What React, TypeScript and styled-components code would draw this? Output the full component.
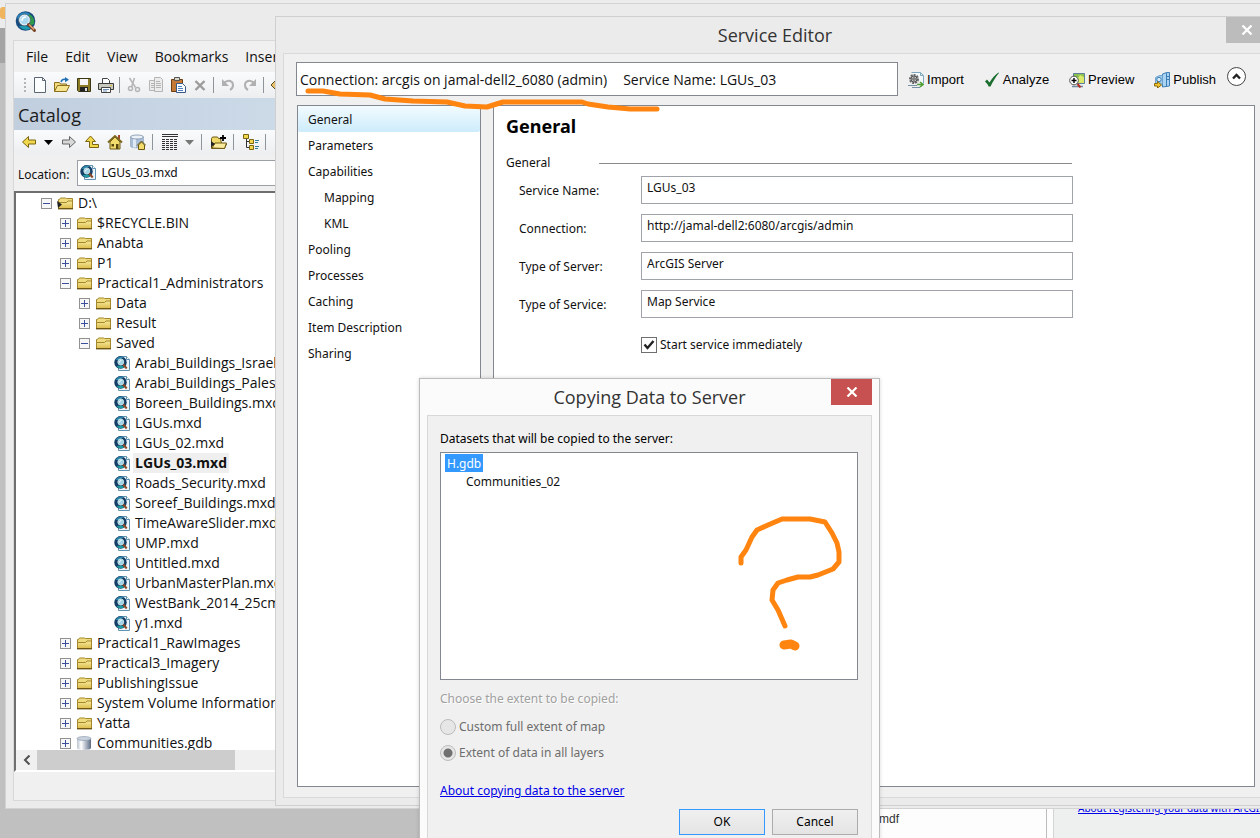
import React from "react";
import styled, { createGlobalStyle, css } from "styled-components";

const UI = `"Open Sans", "Noto Sans", sans-serif`;
const TAHOMA = `"Noto Sans", "DejaVu Sans Condensed", sans-serif`;
const ARIAL = `"Liberation Sans", Arial, sans-serif`;

const GlobalStyle = createGlobalStyle`
  *, *::before, *::after { box-sizing: border-box; }
  body { margin: 0; background: #c0c0c0; font-family: ${UI}; color: #111; overflow: hidden; }
  ul { list-style: none; margin: 0; padding: 0; }
  h1, h2, h3, p { margin: 0; font-weight: 400; }
  button { border: 0; padding: 0; background: none; font: inherit; color: inherit; }
  svg { display: block; flex: none; }
`;

const Desktop = styled.main`
  position: relative;
  height: 100vh;
  overflow: hidden;
  background: linear-gradient(#ececec 28px, #a4a4a4 28px, #a4a4a4 63px, #c0c0c0 63px);
`;

const DesktopBadge = styled.div`
  position: absolute;
  left: 0;
  top: 7px;
  width: 8px;
  height: 12px;
  border-radius: 3px;
  background: #f0b55c;
`;

/* Windows lying behind the ArcMap frame */
const BackWindow = styled.div`
  position: absolute;
  left: 600px;
  right: 0;
  bottom: 0;
  height: 60px;
  display: flex;
  background: #fdfdfd;
`;
const BackFiles = styled.div`
  flex: 0 0 447px;
  padding: 33px 0 0 279px;
  border-right: 1px solid #bdbdbd;
  font: 12px/16px ${ARIAL};
  color: #333;
`;
const BackHelp = styled.div`
  flex: 1;
  margin-left: 6px;
  padding: 22px 0 0 24px;
  border-left: 1px solid #d4d4d4;
  background: #eeefef;
  white-space: nowrap;
  overflow: hidden;
  font: 10px/16px ${TAHOMA};
`;
const Link = styled.a`
  color: #0000e6;
  text-decoration: underline;
`;

const MainWindow = styled.section`
  position: absolute;
  left: 5px;
  right: -30px;
  top: 3px;
  bottom: 29px;
  display: flex;
  flex-direction: column;
  padding: 0 8px 7px 7px;
  background: #ebebeb;
  border: 1px solid #d2d2d2;
`;
const MainTitle = styled.header`
  flex: 0 0 36px;
  padding: 7px 0 0 2px;
`;
const MainBody = styled.div`
  flex: 1;
  min-height: 0;
  display: flex;
  flex-direction: column;
  background: #f0f0f0;
  border: 1px solid #d8d8d8;
`;
const MenuBar = styled.nav`
  display: flex;
  align-items: center;
  gap: 17px;
  flex: 0 0 31px;
  padding-left: 12px;
  font-size: 14px;
`;
const ToolBar = styled.div<{ $gap: number; $indent: number; $height: number }>`
  display: flex;
  align-items: center;
  gap: ${(p) => p.$gap}px;
  padding-left: ${(p) => p.$indent}px;
  flex: 0 0 ${(p) => p.$height}px;
  background: linear-gradient(#fafbfc, #eceef0);
`;
const ToolButton = styled.button`
  display: block;
  flex: none;
`;
const Sep = styled.i<{ $after?: number }>`
  width: 1px;
  height: 16px;
  margin-left: -1px;
  margin-right: ${(p) => p.$after ?? 0}px;
  background: #8f949a;
`;
const Grip = styled.i`
  width: 2px;
  height: 14px;
  background: repeating-linear-gradient(#b4b4b4 0 2px, transparent 2px 4px);
`;
const CatalogTitle = styled.h2`
  flex: 0 0 32px;
  padding: 2px 0 0 4px;
  font-size: 18px;
  line-height: 30px;
  color: #1c1c1c;
  background: linear-gradient(90deg, #c0cede, #ccdae8 260px);
`;
const LocationRow = styled.label`
  display: flex;
  align-items: center;
  gap: 8px;
  flex: 0 0 37px;
  padding-left: 4px;
  font: 12px/16px ${TAHOMA};
`;
const LocationName = styled.span`
  padding-top: 4px;
`;
const LocationBox = styled.div`
  flex: 1;
  display: flex;
  align-items: center;
  gap: 4px;
  height: 26px;
  padding-left: 2px;
  background: #fff;
  border: 1px solid #9aa0a6;
`;
const PlainInput = styled.input`
  flex: 1;
  border: 0;
  padding: 0;
  outline: 0;
  background: none;
  color: #111;
  font: 12px/16px ${TAHOMA};
`;
const TreeBox = styled.div`
  flex: 1;
  min-height: 0;
  display: flex;
  flex-direction: column;
  border: 2px solid #6e6e6e;
  border-right-color: #fff;
  border-bottom-color: #fff;
  background: #fff;
`;
const Tree = styled.ul`
  flex: 1;
  min-height: 0;
  overflow: hidden;
`;
const TreeRow = styled.li<{ $level: number }>`
  display: flex;
  align-items: center;
  height: 20px;
  padding-left: ${(p) => 25 + p.$level * 19}px;
  font-size: 14px;
  white-space: nowrap;
`;
const Expander = styled.button`
  flex: none;
  width: 11px;
  height: 11px;
  margin-right: 5px;
  border: 1px solid #919191;
  background: #f7f7f7;
`;
const ExpanderSpace = styled.span`
  flex: none;
  width: 16px;
`;
const TreeLabel = styled.span<{ $selected?: boolean }>`
  height: 20px;
  margin-left: 2px;
  padding: 0 2px;
  line-height: 20px;
  ${(p) => p.$selected && css`font-weight: 700; background: #efefef;`}
`;
const HScroll = styled.div`
  display: flex;
  flex: 0 0 20px;
  background: #f0f0f0;
`;
const ScrollArrow = styled.button`
  display: grid;
  place-items: center;
  width: 21px;
`;
const ScrollThumb = styled.div`
  width: 198px;
  background: #cdcdcd;
`;
const StatusBar = styled.div`
  flex: 0 0 28px;
`;

const EditorWindow = styled.section`
  position: absolute;
  left: 275px;
  right: -15px;
  top: 16px;
  bottom: 32px;
  display: flex;
  flex-direction: column;
  padding: 0 7px 7px;
  background: #ebebeb;
  border: 1px solid #cfcfcf;
`;
const WindowTitle = styled.header`
  position: relative;
  flex: 0 0 36px;
  margin-bottom: -1px;
  text-align: center;
  color: #333;
`;
const TitleText = styled.h1`
  font-size: 18px;
  line-height: 37px;
`;
const CloseButton = styled.button<{ $color: string }>`
  position: absolute;
  top: 0;
  right: 0;
  width: 41px;
  height: 26px;
  display: grid;
  place-items: center;
  background: ${(p) => p.$color};
`;
const EditorBody = styled.div`
  flex: 1;
  min-height: 0;
  display: flex;
  flex-direction: column;
  gap: 9px;
  padding: 8px 11px 10px 12px;
  background: #f0f0f0;
  border: 1px solid #d9d9d9;
`;
const EditorTop = styled.div`
  display: flex;
  height: 34px;
`;
const ConnectionBox = styled.div`
  flex: 1;
  display: flex;
  gap: 16px;
  padding-left: 3px;
  font-size: 14px;
  line-height: 33px;
  white-space: nowrap;
  overflow: hidden;
  background: #fff;
  border: 1px solid #828790;
`;
const Actions = styled.div`
  display: flex;
  align-items: center;
  gap: 20px;
  padding: 1px 9px 0 10px;
`;
const Action = styled.button`
  display: flex;
  align-items: center;
  gap: 3px;
  font: 13px/18px ${ARIAL};
  color: #000;
`;
const RoundButton = styled.button`
  display: grid;
  place-items: center;
  width: 19px;
  height: 19px;
  margin: 0 0 6px -9px;
  border: 1px solid #444;
  border-radius: 50%;
  background: #fff;
`;
const EditorPanes = styled.div`
  flex: 1;
  min-height: 0;
  display: flex;
  gap: 12px;
  padding-left: 1px;
`;
const SideList = styled.ul`
  flex: 0 0 184px;
  background: #fff;
  border: 1px solid #828790;
`;
const SideItem = styled.li<{ $nested?: boolean; $active?: boolean }>`
  height: 26px;
  padding-left: ${(p) => (p.$nested ? 26 : 10)}px;
  font: 12px/28px ${TAHOMA};
  border-radius: 2px;
  ${(p) => p.$active && css`background: linear-gradient(#f2fbff, #cdecfb);`}
`;
const FormPane = styled.div`
  flex: 1;
  padding: 8px 12px;
  background: #fff;
  border: 1px solid #828790;
  font: 12px/16px ${TAHOMA};
`;
const FormTitle = styled.h2`
  font: 700 18px/24px ${TAHOMA};
  color: #000;
`;
const GroupTitle = styled.div`
  display: flex;
  align-items: center;
  margin-top: 17px;
  width: 566px;
`;
const GroupName = styled.h3`
  font-size: 12px;
  width: 93px;
`;
const GroupRule = styled.hr`
  flex: 1;
  margin: 0;
  border: 0;
  border-top: 1px solid #8a8a8a;
`;
const FormFields = styled.div`
  display: grid;
  gap: 10px;
  margin-top: 5px;
  padding-left: 13px;
`;
const Field = styled.label`
  display: flex;
  align-items: center;
`;
const FieldName = styled.span`
  width: 122px;
  padding-top: 2px;
`;
const FieldInput = styled.input`
  width: 432px;
  height: 28px;
  padding: 0 5px 5px;
  border: 1px solid #a0a4aa;
  background: #fff;
  color: #111;
  outline: 0;
  font: 12px/16px ${TAHOMA};
`;
const CheckRow = styled.label`
  display: flex;
  align-items: center;
  gap: 3px;
  margin: 9px 0 0 122px;
`;
const CheckWrap = styled.span`
  position: relative;
  width: 16px;
  height: 16px;
  svg { position: absolute; left: 2px; top: 2px; pointer-events: none; }
`;
const CheckBox = styled.input`
  appearance: none;
  display: block;
  width: 16px;
  height: 16px;
  margin: 0;
  border: 1px solid #6f6f6f;
  background: #fff;
`;

const Dialog = styled.section`
  position: absolute;
  left: 419px;
  top: 378px;
  width: 461px;
  display: flex;
  flex-direction: column;
  padding: 0 7px 7px;
  background: #fbfbfb;
  border: 1px solid #bcbcbc;
  box-shadow: 0 0 4px rgba(0, 0, 0, 0.15);
`;
const DialogBody = styled.div`
  display: flex;
  flex-direction: column;
  padding: 15px 13px 12px 12px;
  background: #f0f0f0;
  border: 1px solid #d8d8d8;
  font: 12px/16px ${TAHOMA};
`;
const DialogLabel = styled.p<{ $disabled?: boolean }>`
  color: ${(p) => (p.$disabled ? "#a0a0a0" : "#000")};
  text-shadow: ${(p) => (p.$disabled ? "1px 1px 0 #fff" : "none")};
`;
const DataList = styled.ul`
  height: 228px;
  margin: 5px 0 11px;
  padding: 1px 4px;
  background: #fff;
  border: 1px solid #828790;
`;
const DataItem = styled.li<{ $nested?: boolean; $selected?: boolean }>`
  width: max-content;
  height: 18px;
  line-height: 19px;
  padding: 0 2px;
  margin-left: ${(p) => (p.$nested ? 19 : 0)}px;
  ${(p) => p.$selected && css`background: #3399ff; color: #fff;`}
`;
const RadioRow = styled.label`
  display: flex;
  align-items: center;
  gap: 3px;
  height: 26px;
  color: #6d6d6d;
`;
const Radio = styled.input`
  appearance: none;
  width: 16px;
  height: 16px;
  margin: 0;
  border: 1px solid #bcbcbc;
  border-radius: 50%;
  background: #e6e6e6;
  &:checked { background: radial-gradient(circle, #707070 0 4px, #e6e6e6 5px); }
`;
const RadioGroup = styled.div`
  margin: 7px 0 17px;
`;
const DialogButtons = styled.div`
  display: flex;
  justify-content: flex-end;
  gap: 7px;
  margin-top: 10px;
`;
const PushButton = styled.button<{ $primary?: boolean }>`
  width: 86px;
  height: 26px;
  color: #000;
  background: linear-gradient(#f0f0f0, #e4e4e4);
  border: 1px solid ${(p) => (p.$primary ? "#3399ff" : "#acacac")};
`;
const Ink = styled.svg`
  position: absolute;
  left: 0;
  top: 0;
  pointer-events: none;
`;

const Cross = () => (
  <svg width="12" height="10" viewBox="0 0 12 10">
    <path d="M1.500.5l9 9M10.500.5l-9 9" stroke="#fff" strokeWidth="2.200" />
  </svg>
);

const GlobeLens = ({ size }: { size: number }) => (
  <svg width={size} height={size} viewBox="0 0 22 22">
    <circle cx="10.500" cy="10" r="9.800" fill="#174a7e" />
    <path d="M2 6c3-5 9-6 13-3l-3 3-5 1-3 4z" fill="#2b86bd" />
    <path d="M14 3c4 2 6 6 5 10l-4 2-1-6z" fill="#2f9a4c" />
    <path d="M4 15c3 4 8 5 12 2l-5-2z" fill="#1a9db0" />
    <circle cx="9.500" cy="9" r="5" fill="#a9d9f0" stroke="#e4eef4" strokeWidth="1.400" />
    <circle cx="9.500" cy="9" r="5.900" fill="none" stroke="#4d6474" strokeWidth=".7" />
    <path d="M7 10c0-3 2-4 4-4" stroke="#fff" strokeWidth="1.500" fill="none" />
    <path d="M13.500 13.500l6 6" stroke="#7a4326" strokeWidth="3" strokeLinecap="round" />
    <path d="M14 13.500l5 5" stroke="#e8a878" strokeWidth="1.200" />
  </svg>
);

const MxdIcon = () => (
  <svg width="17" height="17" viewBox="0 0 17 17">
    <path d="M4.500 1.500h8l3 3v11h-11z" fill="#eef6fb" stroke="#5f92b3" />
    <path d="M12.500 1.500v3h3" fill="#fff" stroke="#5f92b3" />
    <circle cx="6.500" cy="7.500" r="6.200" fill="#153e66" />
    <path d="M1.500 5c2-3 5-4 8-2.500l-4 2.500z" fill="#2e86a8" />
    <path d="M2.500 11c2 2.500 5 3 8 1l-3-1.500z" fill="#1f9aa0" />
    <circle cx="6.800" cy="7" r="3" fill="#9fd3e6" stroke="#d8e8ea" strokeWidth=".8" />
    <path d="M5.500 7.500c0-1.500 1-2 2-2" stroke="#fff" fill="none" />
    <path d="M9.200 9.500l3.500 4" stroke="#8e4a26" strokeWidth="2" />
  </svg>
);

const FolderIcon = ({ root }: { root?: boolean }) => (
  <svg width="17" height="15" viewBox="0 0 17 15">
    <defs>
      <linearGradient id="fold" x1="0" x2="0" y1="0" y2="1">
        <stop offset="0" stopColor="#f8ea9c" />
        <stop offset="1" stopColor="#dcbc4c" />
      </linearGradient>
    </defs>
    <path d="M1.500 12.500v-9h1l1-1.500h5l1 .5h6v10z" fill="#f0dc80" stroke="#a3872a" />
    <path d="M1.500 6.500h8l1.500-1.500h4.500v7.500h-14z" fill="url(#fold)" stroke="#a3872a" />
    <path d="M1 12.700h15" stroke="#6e5713" strokeWidth="1.400" />
    {root && <path d="M0 5l5 3.500L1 12z" fill="#222" />}
  </svg>
);

const DatabaseIcon = () => (
  <svg width="17" height="15" viewBox="0 0 17 15">
    <defs>
      <linearGradient id="db" x1="0" x2="1">
        <stop offset="0" stopColor="#b9c3d0" />
        <stop offset=".3" stopColor="#fff" />
        <stop offset="1" stopColor="#5b6b84" />
      </linearGradient>
    </defs>
    <path d="M1 2.500v9.500c0 2.500 14 2.500 14 0V2.500z" fill="url(#db)" />
    <ellipse cx="8" cy="2.500" rx="7" ry="2" fill="#c8d2de" stroke="#8795a8" strokeWidth=".6" />
  </svg>
);

const toolIcons: Record<string, React.ReactNode> = {
  New: (
    <>
      <path d="M2.500.5h8l3 3v12h-11z" fill="#fbfdff" stroke="#5c6672" />
      <path d="M10.500.5v3h3" fill="none" stroke="#5c6672" />
    </>
  ),
  Open: (
    <>
      <path d="M.5 14.500v-9h5l1 1.500h6v3" fill="#f3dc7e" stroke="#8b6f1c" />
      <path d="M.5 14.500l3-6h12l-3 6z" fill="#f7e48f" stroke="#8b6f1c" />
      <path d="M7 5c1-3 3-3 5-2.500" fill="none" stroke="#1f6fb5" strokeWidth="1.500" />
      <path d="M11 0l4 2.800-4 2.500z" fill="#1f6fb5" />
    </>
  ),
  Save: (
    <>
      <path d="M1.500 1.500h13v13h-12l-1-1z" fill="#8b7b25" stroke="#3b3613" />
      <path d="M4 2h8v6H4z" fill="#f6f6f6" />
      <path d="M4 10h8v4.500H4z" fill="#222" />
      <path d="M9 11h2v3H9z" fill="#ddd" />
    </>
  ),
  Print: (
    <>
      <path d="M4.500 6.500v-5h5l2 2v3" fill="#fff" stroke="#444" />
      <path d="M.5 6.500h15v6H.5z" fill="#c9c9c0" stroke="#3a3a3a" />
      <path d="M3.500 10.500h9v5h-9z" fill="#fff" stroke="#444" />
      <path d="M5 12.500h6M5 14h4" stroke="#6b8fb8" />
      <path d="M12 8.500h2" stroke="#e0c030" />
    </>
  ),
  Cut: (
    <g stroke="#b4b4b4" fill="none" strokeWidth="1.500">
      <path d="M3.500 1l6 9.500M8.500 1l-3 9" />
      <circle cx="4.500" cy="11.500" r="2" />
      <circle cx="11.500" cy="12.500" r="2" />
    </g>
  ),
  Copy: (
    <g stroke="#b4b4b4" fill="#ececec">
      <path d="M1.500 3.500h8v10h-8z" />
      <path d="M6.500.5h6l2 2v12h-8z" />
      <path d="M8 4.500h4M8 6.500h5M8 8.500h5M8 10.500h5M3 6.500h3M3 8.500h3M3 10.500h3" />
    </g>
  ),
  Paste: (
    <>
      <path d="M1.500 2.500h11v12h-11z" fill="#c47a35" stroke="#6b3e14" />
      <path d="M4.500.5h5v3h-5z" fill="#d8d8c8" stroke="#555" />
      <path d="M6.500 6.500h6l3 3v6h-9z" fill="#fff" stroke="#38598c" />
      <path d="M8 9.500h4M8 11.500h5M8 13.500h5" stroke="#4d82c4" />
    </>
  ),
  Delete: <path d="M3.500 4l9 9M12.500 4l-9 9" stroke="#9c9c9c" strokeWidth="2.400" />,
  Undo: (
    <>
      <path d="M4 6c4-4 9-2 9 2 0 2-1 4-3 5" fill="none" stroke="#b0b0b0" strokeWidth="2" />
      <path d="M2 2v7h7z" fill="#b0b0b0" />
    </>
  ),
  Redo: (
    <>
      <path d="M12 6c-4-4-9-2-9 2 0 2 1 4 3 5" fill="none" stroke="#b0b0b0" strokeWidth="2" />
      <path d="M14 2v7H7z" fill="#b0b0b0" />
    </>
  ),
  "Add Data": <path d="M1 8l6-6 7 6-7 6z" fill="#eac06a" stroke="#5b4a1c" />,
  Back: <path d="M1.500 8l6-5.500V6h7v4h-7v3.500z" fill="#f0d84e" stroke="#7d6410" />,
  Forward: <path d="M14.500 8l-6-5.500V6h-7v4h7v3.500z" fill="#d8d8d8" stroke="#666" />,
  Up: <path d="M1.500 7.500L6.500 2l5 5.500h-3v3h6v3h-9v-6z" fill="#f0d84e" stroke="#7d6410" />,
  Home: (
    <>
      <path d="M11 1h2v4h-2z" fill="#a5482a" />
      <path d="M3 8v7h10V8L8 3z" fill="#f2dc6c" stroke="#6d5813" />
      <path d="M1 8.500L8 2l7 6.500" fill="none" stroke="#7d6820" strokeWidth="2" />
      <path d="M4.500 10h2.500v2.500H4.500zM9 10h2.500v5H9z" fill="#5a4710" />
    </>
  ),
  "Default Geodatabase": (
    <>
      <path d="M.5 3v9c0 2.500 12 2.500 13 0V3z" fill="#a9bfd8" stroke="#8ba0b8" strokeWidth=".6" />
      <path d="M3 4v9.500h3V4z" fill="#dfe9f3" />
      <ellipse cx="7" cy="3" rx="6.500" ry="2" fill="#eaf1f7" stroke="#7b8ea6" strokeWidth=".8" />
      <path d="M8.500 11v4.500h6V11l-3-3z" fill="#f2dc6c" stroke="#6d5813" />
      <path d="M7 11.500l4.500-4.500 4.500 4.500" fill="none" stroke="#6d5813" />
    </>
  ),
  "Contents View": (
    <g stroke="#333">
      <path d="M0 .5h16M0 2.500h16" />
      <path d="M0 5.500h16M0 7.500h16M0 9.500h16M0 11.500h16M0 13.500h16M0 15.500h16" strokeDasharray="3 1" />
    </g>
  ),
  "Connect Folder": (
    <>
      <path d="M.5 14.500v-10l1-1.500h5l1 1.500h2l1 5 5 .500-2 4.500z" fill="#efd768" stroke="#6d5813" />
      <path d="M1 14l3-5h11.500l-2 5.500z" fill="#f9ea9d" stroke="#6d5813" />
      <path d="M0 7l4 3-4 3z" fill="#222" />
      <path d="M12 1v6M9 4h6" stroke="#000" strokeWidth="1.800" />
    </>
  ),
  "Toggle Tree": (
    <>
      <path d="M3.500 4v9.500h4M3.500 7.500h4" stroke="#333" fill="none" />
      <path d="M.5.5h5v4h-5zM6.500 5.500h4v4h-4zM6.500 11.500h4v4h-4z" fill="#f0d84e" stroke="#7d6410" />
      <path d="M12 6.500h4M12 12.500h4M12 8.500h3M12 14.500h3" stroke="#2f7e9a" />
    </>
  ),
  Search: <path d="M1.500 1.500h12v13h-12z" fill="#dfe8f2" stroke="#7c8ea4" />,
};

const Tool = ({ name }: { name: string }) => (
  <ToolButton type="button" aria-label={name}>
    <svg width="16" height="16" viewBox="0 0 16 16">{toolIcons[name]}</svg>
  </ToolButton>
);

const ArrowButton = styled(ToolButton)`
  margin-right: 1px;
`;

const DropArrow = ({ label, color }: { label: string; color: string }) => (
  <ArrowButton type="button" aria-label={label}>
    <svg width="9" height="5" viewBox="0 0 9 5"><path d="M0 0h9L4.500 5z" fill={color} /></svg>
  </ArrowButton>
);

type Node = { level: number; name: string; kind: "root" | "folder" | "mxd" | "gdb"; open?: boolean; selected?: boolean };
const folder = (level: number, name: string, open = false): Node => ({ level, name, kind: "folder", open });
const mxd = (name: string, selected = false): Node => ({ level: 3, name, kind: "mxd", selected });

const nodes: Node[] = [
  { level: 0, name: "D:\\", kind: "root", open: true },
  folder(1, "$RECYCLE.BIN"),
  folder(1, "Anabta"),
  folder(1, "P1"),
  folder(1, "Practical1_Administrators", true),
  folder(2, "Data"),
  folder(2, "Result"),
  folder(2, "Saved", true),
  mxd("Arabi_Buildings_Israel.mxd"),
  mxd("Arabi_Buildings_Palestine.mxd"),
  mxd("Boreen_Buildings.mxd"),
  mxd("LGUs.mxd"),
  mxd("LGUs_02.mxd"),
  mxd("LGUs_03.mxd", true),
  mxd("Roads_Security.mxd"),
  mxd("Soreef_Buildings.mxd"),
  mxd("TimeAwareSlider.mxd"),
  mxd("UMP.mxd"),
  mxd("Untitled.mxd"),
  mxd("UrbanMasterPlan.mxd"),
  mxd("WestBank_2014_25cm.mxd"),
  mxd("y1.mxd"),
  folder(1, "Practical1_RawImages"),
  folder(1, "Practical3_Imagery"),
  folder(1, "PublishingIssue"),
  folder(1, "System Volume Information"),
  folder(1, "Yatta"),
  { level: 1, name: "Communities.gdb", kind: "gdb" },
];

const NodeIcon = ({ kind }: { kind: Node["kind"] }) => {
  if (kind === "mxd") return <MxdIcon />;
  if (kind === "gdb") return <DatabaseIcon />;
  return <FolderIcon root={kind === "root"} />;
};

const sections = [
  { name: "General", active: true },
  { name: "Parameters" },
  { name: "Capabilities" },
  { name: "Mapping", nested: true },
  { name: "KML", nested: true },
  { name: "Pooling" },
  { name: "Processes" },
  { name: "Caching" },
  { name: "Item Description" },
  { name: "Sharing" },
];

const fields = [
  ["Service Name:", "LGUs_03"],
  ["Connection:", "http://jamal-dell2:6080/arcgis/admin"],
  ["Type of Server:", "ArcGIS Server"],
  ["Type of Service:", "Map Service"],
];

const actionIcons: Record<string, React.ReactNode> = {
  Import: (
    <>
      <path d="M3.500.5h9l3 3v8M12.500.5v3h3" fill="#f2f8fb" stroke="#7fa8bd" />
      <circle cx="6" cy="7" r="4" fill="#ddd" stroke="#666" strokeWidth="2" strokeDasharray="2 1" />
      <circle cx="6" cy="7" r="3" fill="#c4c4c4" stroke="#555" />
      <circle cx="6" cy="7" r="1.200" fill="#fff" stroke="#444" />
      <path d="M0 13.500h9M4 15.500h8" stroke="#7790a3" strokeWidth="1.200" />
      <path d="M9 12.500h5M12 10l3 2.500-3 2.500" stroke="#4f9e35" fill="none" strokeWidth="1.500" />
    </>
  ),
  Analyze: <path d="M1 9.500l2-2 2.500 3C8 6 11 3 14.500.5l.5.500C11.500 5 9 9.500 6.500 14.500H4.500C4 12.500 2.500 11 1 9.500z" fill="#1b6e2f" />,
  Preview: (
    <>
      <path d="M4.500 1.500h11v10h-11z" fill="#8cc152" stroke="#5d7f99" />
      <path d="M8 8l3-5 4 2v6H9z" fill="#dbe96a" />
      <path d="M3 14.500h11" stroke="#6f8aa0" strokeWidth="1.500" />
      <circle cx="5" cy="8.500" r="4.300" fill="#fff" stroke="#555" />
      <path d="M2.500 8.500h5M5 6v5" stroke="#000" strokeWidth="1.400" />
      <path d="M8.500 12l3 3.500" stroke="#b32f24" strokeWidth="2" />
    </>
  ),
  Publish: (
    <>
      <path d="M8.500 2l4-1.500h3V14l-7 1z" fill="#a8d3f2" stroke="#3f7eb5" />
      <path d="M12.500 1v14M13 4.500h2M13 7.500h2" stroke="#3f7eb5" />
      <path d="M1.500 5.500l4-2h3V12h-7z" fill="#9ccbed" stroke="#6fa3cc" />
      <circle cx="5" cy="7.500" r="2.200" fill="#d6ecfa" stroke="#3f7eb5" />
      <path d="M.5 11.500h3V9.500l4 3.500-4 3v-2h-3z" fill="#f3c62e" stroke="#8b6a0c" />
    </>
  ),
};

export default function App() {
  return (
    <Desktop>
      <GlobalStyle />
      <DesktopBadge />
      <BackWindow>
        <BackFiles>mdf</BackFiles>
        <BackHelp>
          <Link href="#registering">About registering your data with ArcGIS Server</Link>
        </BackHelp>
      </BackWindow>

      <MainWindow aria-label="ArcMap">
        <MainTitle><GlobeLens size={22} /></MainTitle>
        <MainBody>
          <MenuBar>
            {["File", "Edit", "View", "Bookmarks", "Insert"].map((m) => (
              <button key={m} type="button">{m}</button>
            ))}
          </MenuBar>
          <ToolBar $gap={6} $indent={10} $height={26}>
            <Grip />
            <Tool name="New" /><Tool name="Open" /><Tool name="Save" /><Tool name="Print" />
            <Sep />
            <Tool name="Cut" /><Tool name="Copy" /><Tool name="Paste" /><Tool name="Delete" />
            <Sep />
            <Tool name="Undo" /><Tool name="Redo" />
            <Sep />
            <Tool name="Add Data" />
          </ToolBar>
          <CatalogTitle>Catalog</CatalogTitle>
          <ToolBar $gap={7} $indent={7} $height={24}>
            <Tool name="Back" />
            <DropArrow label="Back history" color="#000" />
            <Tool name="Forward" /><Tool name="Up" /><Tool name="Home" /><Tool name="Default Geodatabase" />
            <Sep $after={2} />
            <Tool name="Contents View" />
            <DropArrow label="View options" color="#777" />
            <Sep $after={2} />
            <Tool name="Connect Folder" />
            <Sep $after={2} />
            <Tool name="Toggle Tree" />
            <Sep $after={2} />
            <Tool name="Search" />
          </ToolBar>
          <LocationRow>
            <LocationName>Location:</LocationName>
            <LocationBox>
              <MxdIcon />
              <PlainInput readOnly value="LGUs_03.mxd" />
            </LocationBox>
          </LocationRow>
          <TreeBox>
            <Tree>
              {nodes.map((n) => (
                <TreeRow key={n.name} $level={n.level}>
                  {n.kind === "mxd" ? (
                    <ExpanderSpace />
                  ) : (
                    <Expander type="button" aria-label={n.open ? "Collapse" : "Expand"}>
                      <svg width="9" height="9" viewBox="0 0 9 9">
                        <path d={n.open ? "M1 4.500h7" : "M1 4.500h7M4.500 1v7"} stroke="#3b4f9c" />
                      </svg>
                    </Expander>
                  )}
                  <NodeIcon kind={n.kind} />
                  <TreeLabel $selected={n.selected}>{n.name}</TreeLabel>
                </TreeRow>
              ))}
            </Tree>
            <HScroll>
              <ScrollArrow type="button" aria-label="Scroll left">
                <svg width="8" height="10" viewBox="0 0 8 10">
                  <path d="M6.500.5L2 5l4.500 4.500" fill="none" stroke="#505050" strokeWidth="2" />
                </svg>
              </ScrollArrow>
              <ScrollThumb />
            </HScroll>
          </TreeBox>
          <StatusBar />
        </MainBody>
      </MainWindow>

      <EditorWindow aria-label="Service Editor">
        <WindowTitle>
          <TitleText>Service Editor</TitleText>
          <CloseButton type="button" aria-label="Close editor" $color="#bcbcbc"><Cross /></CloseButton>
        </WindowTitle>
        <EditorBody>
          <EditorTop>
            <ConnectionBox>
              <span>Connection: arcgis on jamal-dell2_6080 (admin)</span>
              <span>Service Name: LGUs_03</span>
            </ConnectionBox>
            <Actions>
              {Object.keys(actionIcons).map((a) => (
                <Action key={a} type="button">
                  <svg width="16" height="16" viewBox="0 0 16 16">{actionIcons[a]}</svg>
                  {a}
                </Action>
              ))}
              <RoundButton type="button" aria-label="Collapse toolbar">
                <svg width="9" height="7" viewBox="0 0 9 7">
                  <path d="M1 5.500L4.500 2 8 5.500" fill="none" stroke="#222" strokeWidth="2.400" />
                </svg>
              </RoundButton>
            </Actions>
          </EditorTop>
          <EditorPanes>
            <SideList>
              {sections.map((s) => (
                <SideItem key={s.name} $nested={s.nested} $active={s.active}>{s.name}</SideItem>
              ))}
            </SideList>
            <FormPane>
              <FormTitle>General</FormTitle>
              <GroupTitle><GroupName>General</GroupName><GroupRule /></GroupTitle>
              <FormFields>
                {fields.map(([name, value]) => (
                  <Field key={name}>
                    <FieldName>{name}</FieldName>
                    <FieldInput readOnly value={value} />
                  </Field>
                ))}
                <CheckRow>
                  <CheckWrap>
                    <CheckBox type="checkbox" defaultChecked />
                    <svg width="12" height="12" viewBox="0 0 12 12">
                      <path d="M1.500 5.500l3 3.500L10.500 2" fill="none" stroke="#222" strokeWidth="2.400" />
                    </svg>
                  </CheckWrap>
                  Start service immediately
                </CheckRow>
              </FormFields>
            </FormPane>
          </EditorPanes>
        </EditorBody>
      </EditorWindow>

      <Dialog role="dialog" aria-label="Copying Data to Server">
        <WindowTitle>
          <TitleText>Copying Data to Server</TitleText>
          <CloseButton type="button" aria-label="Close dialog" $color="#c75050"><Cross /></CloseButton>
        </WindowTitle>
        <DialogBody>
          <DialogLabel>Datasets that will be copied to the server:</DialogLabel>
          <DataList>
            <DataItem $selected>H.gdb</DataItem>
            <DataItem $nested>Communities_02</DataItem>
          </DataList>
          <DialogLabel $disabled>Choose the extent to be copied:</DialogLabel>
          <RadioGroup>
            <RadioRow><Radio type="radio" name="extent" disabled />Custom full extent of map</RadioRow>
            <RadioRow><Radio type="radio" name="extent" disabled defaultChecked />Extent of data in all layers</RadioRow>
          </RadioGroup>
          <p><Link href="#about-copying">About copying data to the server</Link></p>
          <DialogButtons>
            <PushButton type="button" $primary>OK</PushButton>
            <PushButton type="button">Cancel</PushButton>
          </DialogButtons>
        </DialogBody>
      </Dialog>

      <Ink width="900" height="700" viewBox="0 0 900 700" fill="none" stroke="#ff8410" strokeLinecap="round" strokeLinejoin="round">
        <path d="M308 91L323 91 340 94 370 95 385 99 413 101 447 102 465 106 487 107 503 102 582 102 588 104 608 107 630 109 657 109" strokeWidth="5" />
        <path d="M741 563L741 557 746 550 752 537 757 530 768 525 782 519 810 519 825 522 832 533 837 543 839 552 839 562 833 569 823 573 818 575 810 577 798 577 787 580 778 583 773 590 772 600 778 610 785 626" strokeWidth="5" />
        <path d="M784 645L791 644 795 646" strokeWidth="9" />
      </Ink>
    </Desktop>
  );
}
